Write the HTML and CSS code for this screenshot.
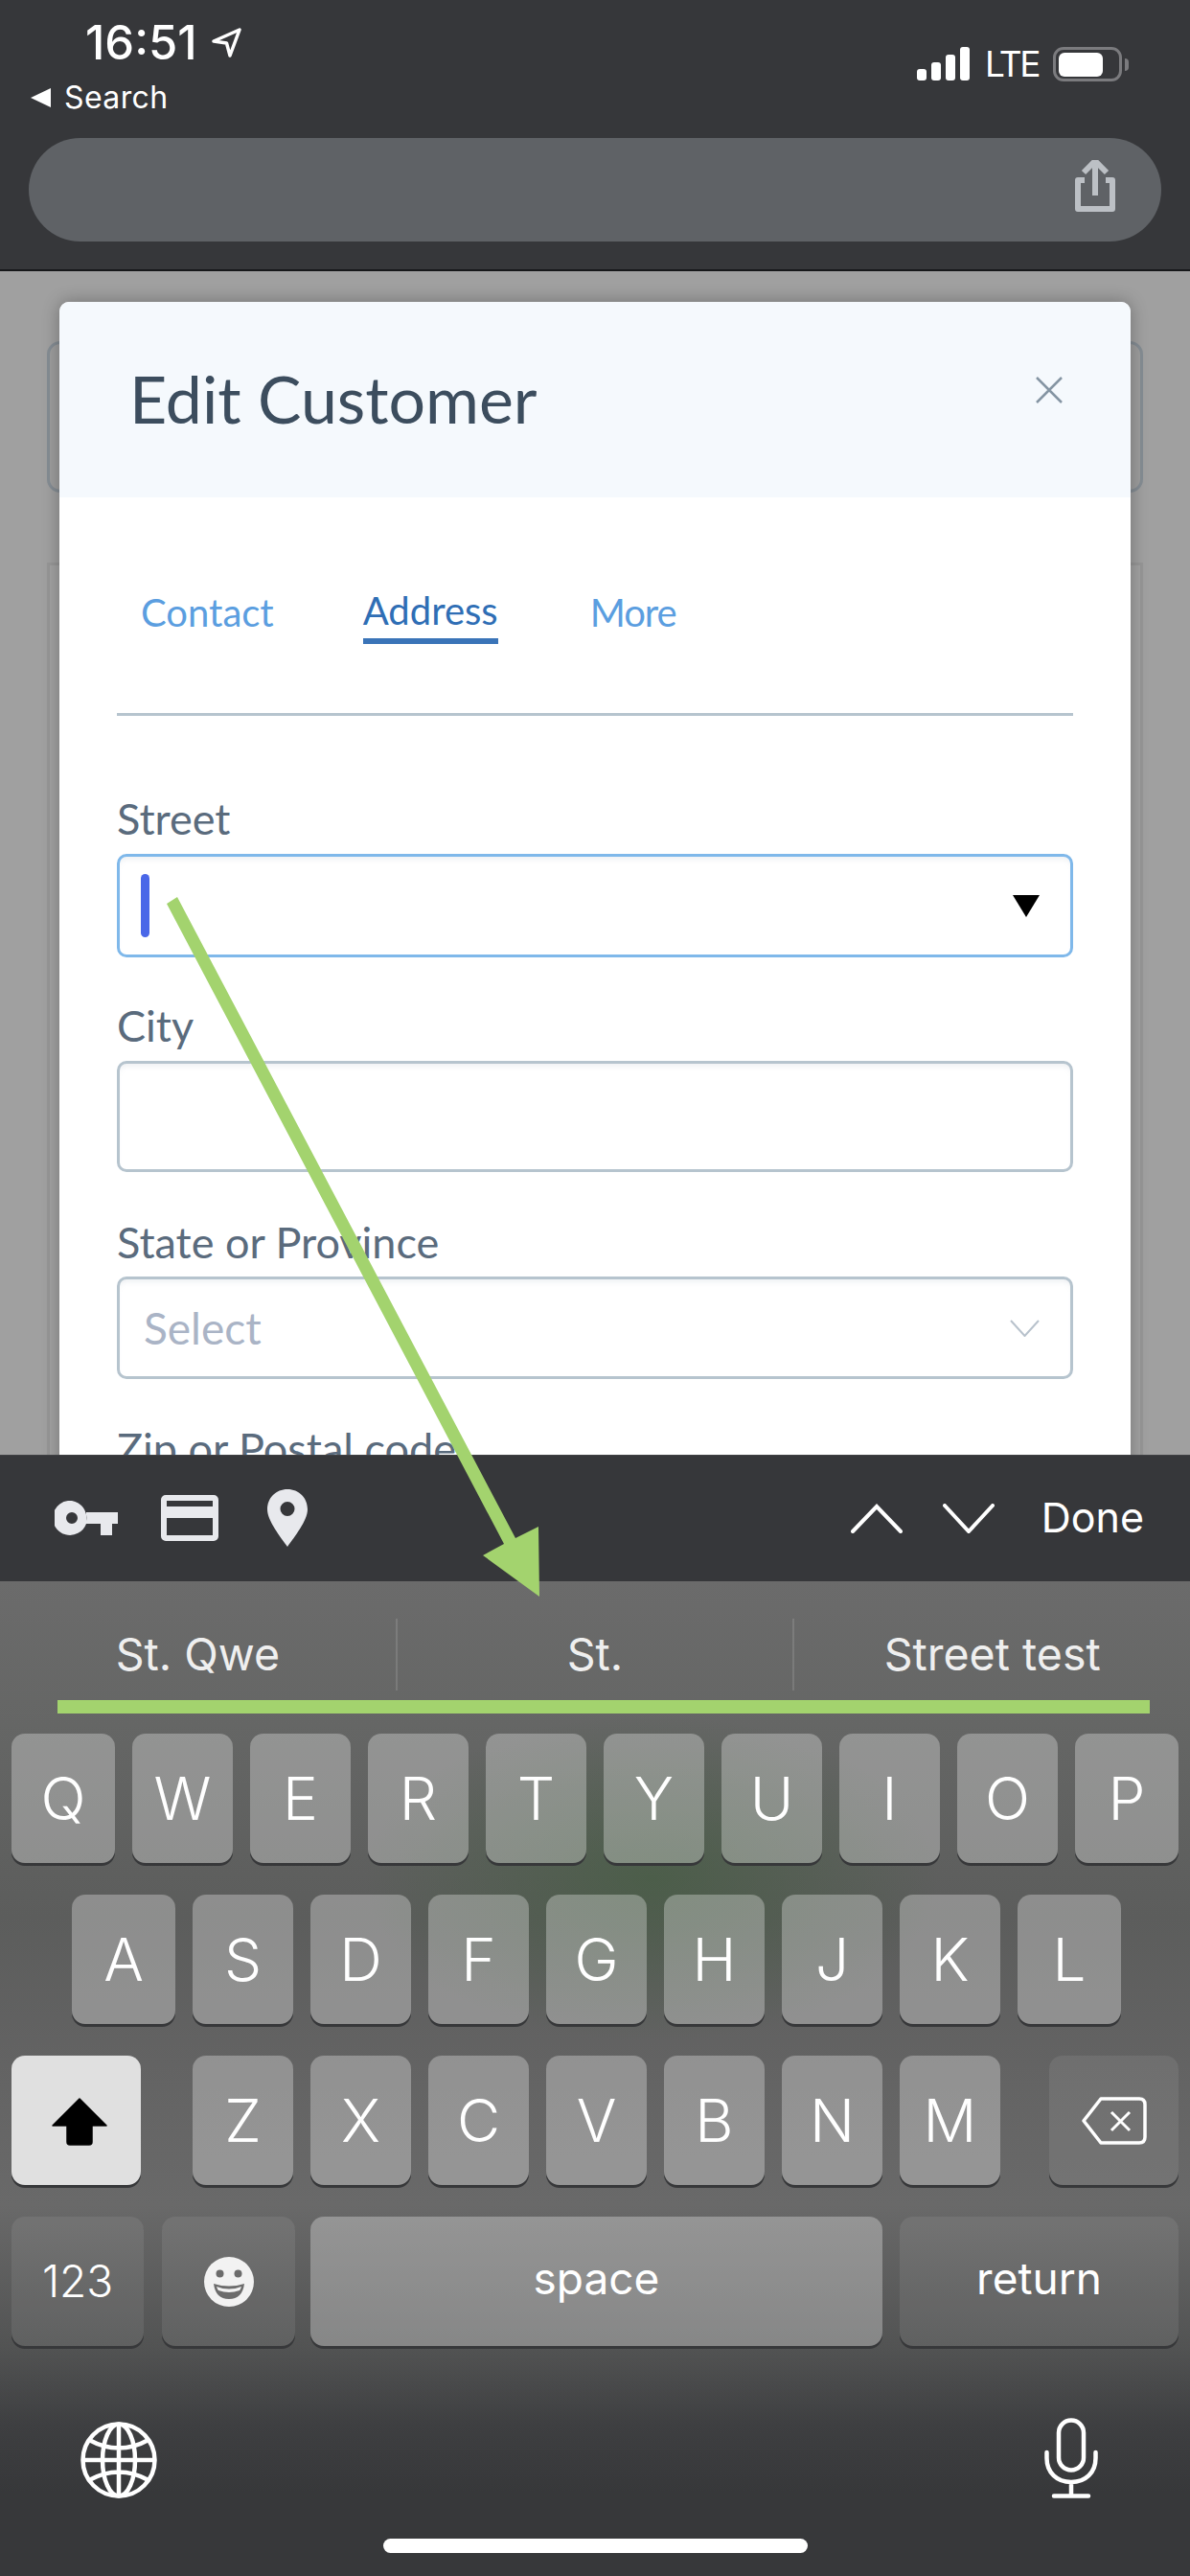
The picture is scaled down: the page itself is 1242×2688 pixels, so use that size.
FILE: index.html
```html
<!DOCTYPE html>
<html lang="en">
<head>
<meta charset="utf-8">
<title>Edit Customer</title>
<link rel="stylesheet" href="styles.css">
</head>
<body>
<div class="phone">
  <header class="topbar">
    <div class="status">
      <div class="status-left">
        <div class="time-row">
          <span class="time">16:51</span>
          <svg class="loc" viewBox="0 0 31 32"><path d="M2 14 29 2 19 29 15.500 16Z" fill="none" stroke="#fff" stroke-width="3.500" stroke-linejoin="round"/></svg>
        </div>
        <div class="back-row">
          <svg class="back" viewBox="0 0 21 20"><path d="M0 10 21 0V20Z" fill="#fff"/></svg>
          <span class="back-text">Search</span>
        </div>
      </div>
      <div class="status-right">
        <div class="signal"><i class="b1"></i><i class="b2"></i><i class="b3"></i><i class="b4"></i></div>
        <span class="lte">LTE</span>
        <div class="battery"><div class="battery-fill"></div></div>
        <div class="battery-cap"></div>
      </div>
    </div>
    <div class="urlbar">
      <svg class="share" viewBox="0 0 42 54"><path d="M10 21H3V51H39V21H32" fill="none" stroke="#bcc0c5" stroke-width="6" stroke-linejoin="round"/><path d="M21 37V4" stroke="#bcc0c5" stroke-width="6"/><path d="M9 13 21 1 33 13" fill="none" stroke="#bcc0c5" stroke-width="6"/></svg>
    </div>
  </header>

  <main class="content">
    <div class="bg-card bg-card-top"></div>
    <div class="bg-card bg-card-main"></div>
    <section class="modal">
      <div class="modal-head">
        <h1 class="modal-title">Edit Customer</h1>
        <svg class="close" viewBox="0 0 28 28"><path d="M1 1 27 27M27 1 1 27" stroke="#8595a3" stroke-width="2.500"/></svg>
      </div>
      <div class="modal-body">
        <nav class="tabs">
          <span class="tab tab-contact">Contact</span>
          <span class="tab tab-active">Address</span>
          <span class="tab tab-more">More</span>
        </nav>
        <div class="divider"></div>
        <label class="label label-street">Street</label>
        <div class="field field-focus">
          <span class="caret"></span>
          <svg class="tri" viewBox="0 0 28 23"><path d="M0 0H28L14 23Z" fill="#000"/></svg>
        </div>
        <label class="label label-city">City</label>
        <div class="field field-city"></div>
        <label class="label label-state">State or Province</label>
        <div class="field field-select">
          <span class="placeholder">Select</span>
          <svg class="chev" viewBox="0 0 31 18"><path d="M1 1 15.500 17 30 1" fill="none" stroke="#b8c2cc" stroke-width="2"/></svg>
        </div>
        <label class="label label-zip">Zip or Postal code</label>
      </div>
    </section>
  </main>

  <div class="accessory">
    <div class="acc-left">
      <svg class="i-key" viewBox="0 0 66 36"><path fill-rule="evenodd" d="M18 0A18 18 0 0 1 33 21H33V12H66V24H60V36H48V24H33A18 18 0 1 1 18 0ZM18 12A6 6 0 1 0 18 24 6 6 0 0 0 18 12Z" fill="#e8e9ed"/></svg>
      <svg class="i-card" viewBox="0 0 60 48"><path fill-rule="evenodd" d="M5 0H55A5 5 0 0 1 60 5V43A5 5 0 0 1 55 48H5A5 5 0 0 1 0 43V5A5 5 0 0 1 5 0ZM6 6V12H54V6ZM6 24V42H54V24Z" fill="#e8e9ed"/></svg>
      <svg class="i-pin" viewBox="0 0 42 60"><path fill-rule="evenodd" d="M21 0C33 0 42 9 42 21 42 33 28 50 21 60 14 50 0 33 0 21 0 9 9 0 21 0ZM21 13A7.500 7.500 0 1 0 21 28 7.500 7.500 0 0 0 21 13Z" fill="#e8e9ed"/></svg>
    </div>
    <div class="acc-right">
      <svg class="i-up" viewBox="0 0 54 31"><path d="M2 29 27 3 52 29" fill="none" stroke="#fff" stroke-width="4" stroke-linecap="round"/></svg>
      <svg class="i-down" viewBox="0 0 54 31"><path d="M2 2 27 29 52 2" fill="none" stroke="#fff" stroke-width="4" stroke-linecap="round"/></svg>
      <span class="done">Done</span>
    </div>
  </div>

  <section class="keyboard">
    <div class="suggest">
      <span class="sug">St. Qwe</span>
      <span class="sug sug-mid">St.</span>
      <span class="sug">Street test</span>
    </div>
    <div class="rows">
      <div class="row">
        <span class="key k-wide">Q</span><span class="key">W</span><span class="key">E</span><span class="key">R</span><span class="key">T</span><span class="key">Y</span><span class="key">U</span><span class="key">I</span><span class="key">O</span><span class="key k-wide">P</span>
      </div>
      <div class="row row-two">
        <span class="key k-wide">A</span><span class="key">S</span><span class="key">D</span><span class="key">F</span><span class="key">G</span><span class="key">H</span><span class="key">J</span><span class="key">K</span><span class="key k-wide">L</span>
      </div>
      <div class="row">
        <span class="key k-shift"><svg class="i-shift" viewBox="0 0 58 50"><path d="M29 1 57 29H42V46Q42 49 39 49H19Q16 49 16 46V29H1Z" fill="#000" stroke="#000" stroke-width="1.500" stroke-linejoin="round"/></svg></span>
        <span class="key k-after-shift">Z</span><span class="key">X</span><span class="key">C</span><span class="key">V</span><span class="key">B</span><span class="key">N</span><span class="key">M</span>
        <span class="key k-dark k-del"><svg class="i-del" viewBox="0 0 68 50"><path d="M20 2H60Q66 2 66 8V42Q66 48 60 48H20L2 25Z" fill="none" stroke="#fff" stroke-width="3.500" stroke-linejoin="round"/><path d="M31 16 50 35M50 16 31 35" stroke="#fff" stroke-width="3"/></svg></span>
      </div>
      <div class="row row-bottom">
        <span class="key k-dark k-123">123</span>
        <span class="key k-dark k-emoji"><svg class="i-emoji" viewBox="0 0 52 52"><circle cx="26" cy="26" r="26" fill="#f2f2f2"/><circle cx="16.500" cy="17.500" r="4" fill="#6c6c6c"/><circle cx="35.500" cy="17.500" r="4" fill="#6c6c6c"/><path d="M10 28Q26 33 42 28 40 44 26 44 12 44 10 28Z" fill="#6c6c6c"/><path d="M13 31Q26 36 39 31 38 34 37 35 26 39 15 35 14 34 13 31Z" fill="#f2f2f2"/></svg></span>
        <span class="key k-space">space</span>
        <span class="key k-dark k-return">return</span>
      </div>
    </div>
    <div class="kb-bottom">
      <svg class="i-globe" viewBox="0 0 80 80"><g fill="none" stroke="#fff" stroke-width="4.500"><circle cx="40" cy="40" r="37.500"/><ellipse cx="40" cy="40" rx="17" ry="37.500"/><path d="M40 2V78M3 40H77M9 19Q40 36 71 19M9 61Q40 44 71 61"/></g></svg>
      <svg class="i-mic" viewBox="0 0 56 84"><g fill="none" stroke="#fff" stroke-width="4.500" stroke-linecap="round"><rect x="15" y="2.500" width="26" height="52" rx="13"/><path d="M2.500 36V42C2.500 57 13 67 28 67 43 67 53.500 57 53.500 42V36M28 67V81M10 81.500H46"/></g></svg>
    </div>
    <div class="home"></div>
  </section>

  <svg class="annot" viewBox="0 0 1242 2688" aria-hidden="true">
    <path d="M174 943 185 936 538 1605 562 1593 563 1666 504 1623 526 1611Z" fill="#a3d36e"/>
    <rect x="60" y="1774" width="1140" height="14" fill="#a3d36e"/>
  </svg>
</div>
</body>
</html>
```

FILE: styles.css
```css
* { box-sizing: border-box; }
html, body { margin: 0; padding: 0; }
body { width: 1242px; height: 2688px; overflow: hidden; background: #36373a; }
svg { display: block; flex: none; }

.phone {
  position: relative;
  width: 1242px;
  height: 2688px;
  display: flex;
  flex-direction: column;
  overflow: hidden;
  font-family: "Inter", "Liberation Sans", sans-serif;
}

/* top browser chrome */
.topbar {
  height: 283px;
  flex: none;
  background: #36373a;
  border-bottom: 2px solid #17181a;
  padding: 0 30px;
}
.status { height: 144px; display: flex; justify-content: space-between; }
.status-left { padding-top: 23px; }
.time-row { display: flex; align-items: center; margin-left: 59px; height: 44px; gap: 15px; }
.time { color: #fff; font-size: 49px; font-weight: 500; line-height: 44px; }
.loc { width: 31px; height: 32px; }
.back-row { display: flex; align-items: center; margin: 22px 0 0 2px; height: 26px; gap: 14px; }
.back { width: 21px; height: 20px; }
.back-text { color: #fff; font-size: 32px; line-height: 26px; letter-spacing: .4px; }
.status-right { display: flex; align-items: flex-start; padding: 49px 0 0; margin-right: 34px; }
.signal { display: flex; align-items: flex-end; gap: 5px; height: 35px; width: 55px; }
.signal i { display: block; width: 10px; background: #fff; border-radius: 3px; }
.b1 { height: 12px; } .b2 { height: 19px; } .b3 { height: 27px; } .b4 { height: 35px; }
.lte { color: #fff; font-size: 37px; line-height: 36px; margin: 0 17px 0 16px; width: 54px; letter-spacing: -2.5px; }
.battery { width: 72px; height: 36px; border: 3px solid #7b7b7e; border-radius: 11px; padding: 3px; }
.battery-fill { width: 46px; height: 25px; background: #fff; border-radius: 6px; }
.battery-cap { width: 4px; height: 13px; margin: 12px 0 0 3px; background: #7b7b7e; border-radius: 0 4px 4px 0; }
.urlbar {
  height: 108px;
  background: #5f6266;
  border-radius: 54px;
  display: flex;
  justify-content: flex-end;
  padding: 23px 48px 0 0;
}
.share { width: 42px; height: 54px; }

/* dimmed page */
.content {
  position: relative;
  height: 1235px;
  flex: none;
  overflow: hidden;
  background: #a0a0a0;
  padding: 73px 49px 0;
}
.bg-card { border: 3px solid #858d94; }
.bg-card-top { height: 158px; border-radius: 14px; background: #9e9e9e; }
.bg-card-main { height: 1200px; margin-top: 73px; border-color: #979797; background: #a2a2a2; }
.modal {
  position: absolute;
  left: 62px;
  top: 32px;
  width: 1118px;
  height: 1400px;
  background: #fff;
  border-radius: 10px 10px 0 0;
  box-shadow: 0 0 18px rgba(0, 0, 0, .3);
  font-family: "Lato", "Open Sans", sans-serif;
}
.modal-head {
  height: 204px;
  background: #f5f9fd;
  border-radius: 10px 10px 0 0;
  display: flex;
  justify-content: space-between;
  padding: 65px 71px 0 73px;
}
.modal-title { margin: 0; color: #3c4d5e; font-size: 68px; font-weight: 400; line-height: 72px; }
.close { width: 28px; height: 28px; margin-top: 13px; }
.modal-body { padding: 0 60px; }
.tabs { display: flex; height: 203px; padding-left: 25px; }
.tab { color: #5b9ee0; font-size: 40px; line-height: 48px; }
.tab-contact { margin-top: 96px; }
.tab-active {
  margin: 94px 0 0 93px;
  height: 59px;
  color: #2f6eb5;
  border-bottom: 6px solid #3a74b8;
}
.tab-more { margin: 96px 0 0 96px; letter-spacing: -1px; }
.divider { height: 3px; margin-top: 22px; background: #b6c4ce; }
.label { display: block; color: #5a6b7d; font-size: 45px; line-height: 52px; }
.label-street { margin-top: 81px; }
.label-city { margin-top: 45px; }
.label-state { margin-top: 47px; }
.label-zip { margin-top: 46px; }
.field {
  position: relative;
  height: 108px;
  margin-top: 11px;
  background: #fff;
  border: 3px solid #b6c4ce;
  border-radius: 10px;
  box-shadow: inset 0 6px 6px -4px rgba(120, 140, 160, .15);
  display: flex;
  align-items: center;
  justify-content: space-between;
  padding: 0 32px 0 22px;
}
.field-focus { border-color: #7fb8ea; }
.field-city { height: 116px; }
.field-select { height: 107px; margin-top: 10px; }
.caret { width: 9px; height: 66px; background: #4a67e8; border-radius: 5px; }
.tri { width: 28px; height: 23px; }
.placeholder { color: #aab4c6; font-size: 46px; line-height: 52px; margin-left: 3px; }
.chev { width: 31px; height: 18px; }

/* keyboard accessory bar */
.accessory {
  height: 132px;
  flex: none;
  background: #36373a;
  border-top: 1px solid #404144;
  display: flex;
  justify-content: space-between;
  padding: 0 48px 0 57px;
}
.acc-left { display: flex; align-items: flex-start; }
.i-key { width: 66px; height: 36px; margin-top: 47px; }
.i-card { width: 60px; height: 48px; margin: 41px 0 0 45px; }
.i-pin { width: 42px; height: 60px; margin: 35px 0 0 51px; }
.acc-right { display: flex; align-items: flex-start; }
.i-up { width: 54px; height: 31px; margin-top: 50px; }
.i-down { width: 54px; height: 31px; margin: 50px 0 0 42px; }
.done { color: #fff; font-size: 43px; line-height: 52px; margin: 38px 0 0 49px; }

/* keyboard */
.keyboard {
  flex: 1;
  display: flex;
  flex-direction: column;
  background:
    radial-gradient(ellipse 300px 170px at 680px 310px, rgba(58, 92, 54, .5), rgba(58, 92, 54, 0)),
    linear-gradient(180deg, #6b6b6b 0, #656665 150px, #5c5d5c 350px, #626262 480px, #696969 650px, #525353 800px, #3e3f41 880px, #37383a 950px);
}
.suggest { height: 159px; padding-top: 39px; display: flex; }
.sug {
  flex: 1;
  height: 75px;
  color: #efefef;
  font-size: 46.500px;
  line-height: 75px;
  text-align: center;
}
.sug-mid { border-left: 2px solid rgba(255, 255, 255, .13); border-right: 2px solid rgba(255, 255, 255, .13); }
.rows { display: flex; flex-direction: column; gap: 33px; padding: 0 12px; }
.row { display: flex; gap: 18px; height: 135px; }
.row-two { padding-left: 63px; }
.key {
  width: 105px;
  height: 135px;
  flex: none;
  background: rgba(255, 255, 255, .3);
  border-radius: 14px;
  box-shadow: 0 3px 0 #37383a;
  color: #fff;
  font-size: 62px;
  font-weight: 300;
  display: flex;
  align-items: center;
  justify-content: center;
}
.k-wide { width: 108px; }
.k-shift { width: 135px; background: #e0e0e0; }
.k-after-shift { margin-left: 36px; }
.k-dark { background: rgba(255, 255, 255, .08); }
.k-del { width: 135px; margin-left: 33px; }
.row-bottom .key { font-size: 46px; font-weight: 400; }
.row-bottom .k-123 { width: 138px; font-weight: 300; padding-bottom: 2px; }
.k-emoji { width: 139px; margin-left: 1px; }
.k-space { width: 597px; margin-left: -2px; padding-bottom: 8px; }
.k-return { width: 291px; padding-bottom: 8px; }
.i-shift { width: 58px; height: 50px; margin: 0 0 -2px 6px; }
.i-del { width: 68px; height: 50px; }
.i-emoji { width: 52px; height: 52px; }
.kb-bottom {
  display: flex;
  justify-content: space-between;
  align-items: flex-end;
  height: 84px;
  margin-top: 75px;
  padding: 0 96px 0 84px;
}
.i-globe { width: 80px; height: 80px; }
.i-mic { width: 56px; height: 84px; }
.home { width: 443px; height: 15px; margin: 42px 0 0 400px; background: #fff; border-radius: 8px; }

/* annotation drawn over the screenshot */
.annot { position: absolute; left: 0; top: 0; width: 1242px; height: 2688px; pointer-events: none; }
```
